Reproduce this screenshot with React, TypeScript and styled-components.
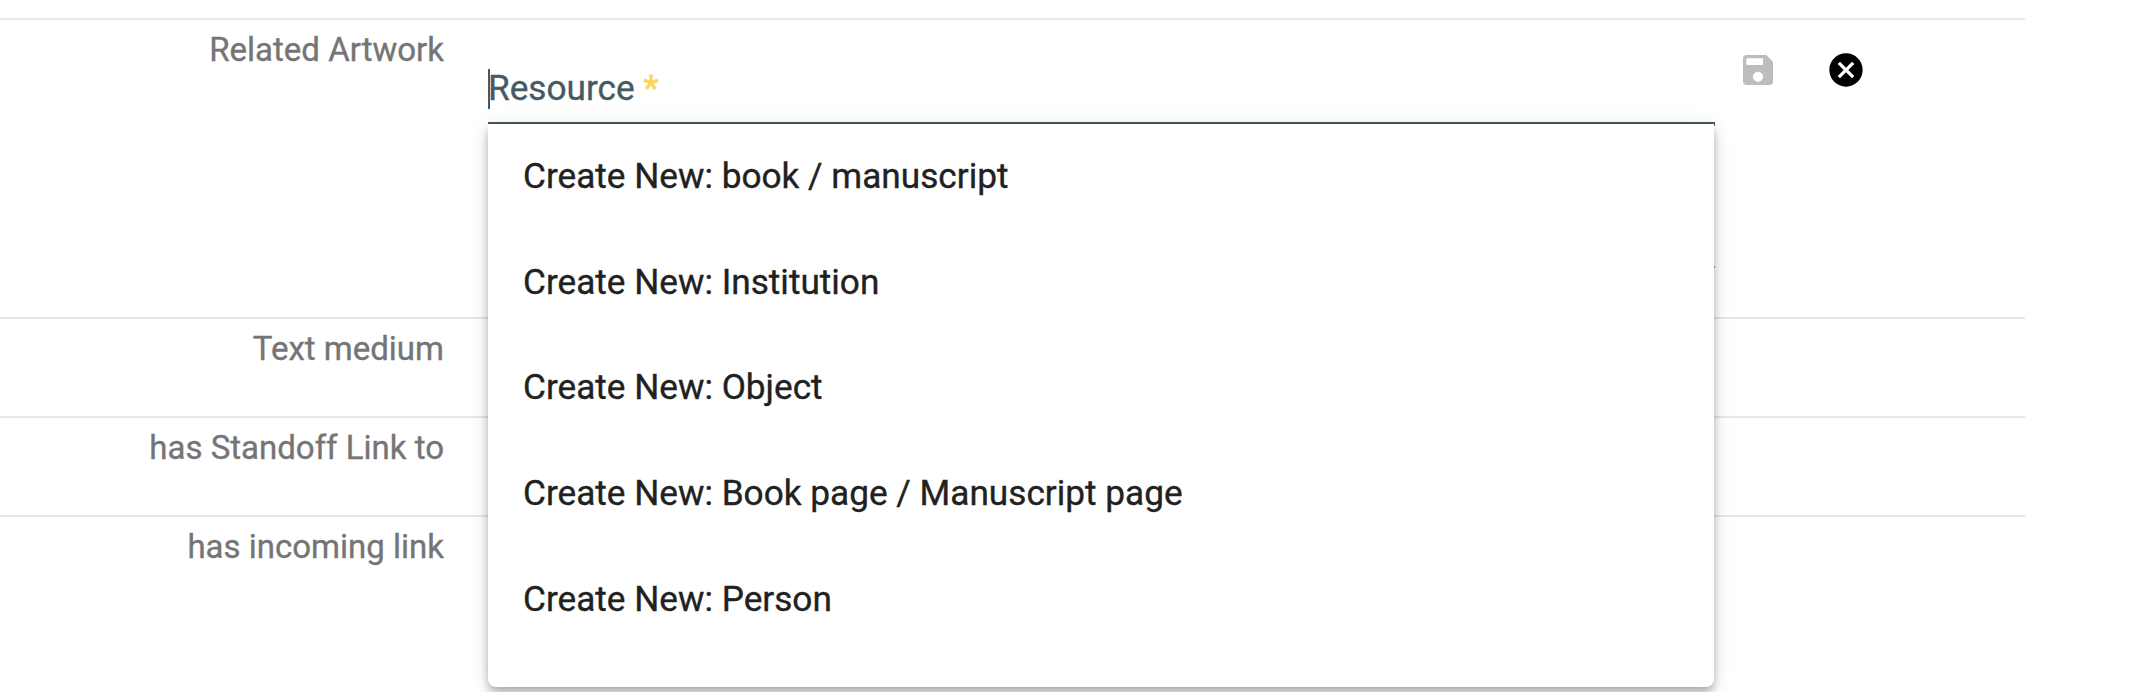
import React from 'react';
import styled, { createGlobalStyle } from 'styled-components';

const GlobalStyle = createGlobalStyle`
  *, *::before, *::after { box-sizing: border-box; }
  html, body { margin: 0; padding: 0; overflow: hidden; background: #fff; }
  body {
    font-family: Roboto, "Liberation Sans", sans-serif;
    -webkit-text-stroke: 0.35px currentColor;
  }
`;

const Page = styled.main`
  width: 2025px;
  height: 692px;
  padding-top: 18px;
`;

const PropertyRow = styled.section<{ $height: number }>`
  display: grid;
  grid-template-columns: 444px 1227px auto;
  column-gap: 44px;
  height: ${({ $height }) => $height}px;
  border-top: 2px solid #e7e7e7;
`;

const PropertyLabel = styled.h3`
  margin: 0;
  padding-top: 10px;
  font-size: 33px;
  line-height: 40px;
  font-weight: 400;
  text-align: right;
  white-space: nowrap;
  color: #757575;
`;

const Editor = styled.div`
  display: flex;
  flex-direction: column;
  position: relative;
`;

const ResourceField = styled.div`
  display: flex;
  align-items: flex-start;
  height: 106px;
  padding-top: 49px;
  border-bottom: 4px solid #455a64;
`;

const Caret = styled.span`
  width: 2px;
  height: 40px;
  margin-right: -2px;
  background: #455a64;
`;

const FieldLabel = styled.label`
  font-size: 35.2px;
  line-height: 38px;
  white-space: pre;
  color: #455a64;
`;

const RequiredMark = styled.span`
  color: #fbd75b;
  -webkit-text-stroke: 0.8px currentColor;
`;

const CommentField = styled.div`
  height: 142px;
  border-bottom: 2px solid #8d8d8d;
`;

const OptionPanel = styled.ul`
  position: absolute;
  top: 104px;
  left: 0;
  width: 1226px;
  height: 563px;
  margin: 0;
  padding: 0;
  list-style: none;
  overflow: hidden;
  background: #fff;
  border-radius: 0 0 8px 8px;
  box-shadow:
    0 4px 8px -2px rgba(0, 0, 0, 0.2),
    0 8px 10px 0 rgba(0, 0, 0, 0.14),
    0 2px 20px 0 rgba(0, 0, 0, 0.12);
`;

const Option = styled.li`
  height: 105.7px;
  padding: 0 35px;
  font-size: 35.2px;
  line-height: 104px;
  white-space: nowrap;
  color: #212121;
`;

const Actions = styled.div`
  display: flex;
  align-items: flex-start;
  gap: 48.4px;
  padding-top: 30px;
  margin-left: -21px;
`;

const IconButton = styled.button`
  display: flex;
  width: 40px;
  height: 40px;
  padding: 0;
  border: 0;
  background: none;
  color: #000;

  &:disabled { color: #bdbdbd; }
`;

const Icon = styled.svg`
  width: 40px;
  height: 40px;
  fill: currentColor;
`;

const options = [
  'book / manuscript',
  'Institution',
  'Object',
  'Book page / Manuscript page',
  'Person',
];

export default function App() {
  return (
    <>
      <GlobalStyle />
      <Page>
        <PropertyRow $height={299}>
          <PropertyLabel>Related Artwork</PropertyLabel>
          <Editor>
            <ResourceField>
              <Caret />
              <FieldLabel>
                Resource <RequiredMark>*</RequiredMark>
              </FieldLabel>
            </ResourceField>
            <CommentField />
            <OptionPanel>
              {options.map((name) => (
                <Option key={name}>Create New: {name}</Option>
              ))}
            </OptionPanel>
          </Editor>
          <Actions>
            <IconButton disabled aria-label="Save">
              <Icon viewBox="0 0 24 24">
                <path d="M17 3H5c-1.11 0-2 .9-2 2v14c0 1.1.89 2 2 2h14c1.1 0 2-.9 2-2V7l-4-4zm-5 16c-1.66 0-3-1.34-3-3s1.34-3 3-3 3 1.34 3 3-1.34 3-3 3zm3-10H5V5h10v4z" />
              </Icon>
            </IconButton>
            <IconButton aria-label="Cancel">
              <Icon viewBox="0 0 24 24">
                <path d="M12 2C6.47 2 2 6.47 2 12s4.47 10 10 10 10-4.47 10-10S17.53 2 12 2zm5 13.59L15.59 17 12 13.41 8.41 17 7 15.59 10.59 12 7 8.41 8.41 7 12 10.59 15.59 7 17 8.41 13.41 12 17 15.59z" />
              </Icon>
            </IconButton>
          </Actions>
        </PropertyRow>
        <PropertyRow $height={99}>
          <PropertyLabel>Text medium</PropertyLabel>
        </PropertyRow>
        <PropertyRow $height={99}>
          <PropertyLabel>has Standoff Link to</PropertyLabel>
        </PropertyRow>
        <PropertyRow $height={177}>
          <PropertyLabel>has incoming link</PropertyLabel>
        </PropertyRow>
      </Page>
    </>
  );
}
